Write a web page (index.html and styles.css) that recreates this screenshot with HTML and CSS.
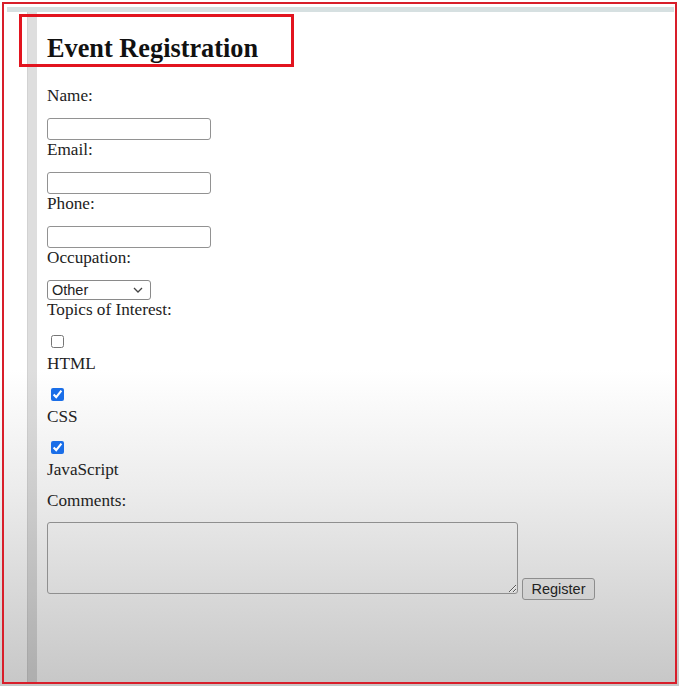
FILE: index.html
```html
<!DOCTYPE html>
<html lang="en">
<head>
<meta charset="utf-8">
<title>Event Registration</title>
<link rel="stylesheet" href="styles.css">
</head>
<body>
<div class="frame">
  <div class="strip"></div>
  <div class="page">
    <div class="gutter"></div>
    <div class="bar"></div>
    <form class="content">
      <h1 class="title">Event Registration</h1>
      <label class="lbl first" for="name">Name:</label>
      <input class="field" type="text" id="name">
      <label class="lbl" for="email">Email:</label>
      <input class="field" type="email" id="email">
      <label class="lbl" for="phone">Phone:</label>
      <input class="field" type="tel" id="phone">
      <label class="lbl" for="occ">Occupation:</label>
      <div class="select-wrap">
        <select class="select" id="occ">
          <option>Student</option>
          <option>Professional</option>
          <option selected>Other</option>
        </select>
        <svg class="chev" width="10" height="6" viewBox="0 0 10 6"><path d="M1 1 L5 5 L9 1" fill="none" stroke="#444" stroke-width="1.3"/></svg>
      </div>
      <label class="lbl topics">Topics of Interest:</label>
      <input class="check" type="checkbox" id="t1">
      <label class="lbl cb-lbl" for="t1">HTML</label>
      <input class="check" type="checkbox" id="t2" checked>
      <label class="lbl cb-lbl" for="t2">CSS</label>
      <input class="check" type="checkbox" id="t3" checked>
      <label class="lbl cb-lbl" for="t3">JavaScript</label>
      <label class="lbl comments" for="cm">Comments:</label>
      <div class="submit-row">
        <textarea class="area" id="cm"></textarea>
        <button class="btn" type="button">Register</button>
      </div>
    </form>
  </div>
  <div class="callout"></div>
</div>
</body>
</html>
```

FILE: styles.css
```css
html, body {
  margin: 0;
  padding: 0;
}
body {
  width: 679px;
  height: 686px;
  overflow: hidden;
  background: linear-gradient(to bottom, #ffffff 0, #ffffff 370px, #ececec 490px, #d9d9d9 590px, #c7c7c7 686px);
  font-family: "Liberation Serif", "Times New Roman", serif;
  color: #222;
}
.frame {
  position: relative;
  box-sizing: border-box;
  margin: 2px 2px 0 2px;
  width: 675px;
  height: 682px;
  border: 2px solid #d81e2a;
  padding: 3px 1px 0 3px;
  display: flex;
  flex-direction: column;
}
.strip {
  height: 5px;
  background: #d6e0e1;
  flex: none;
}
.page {
  flex: 1;
  display: flex;
}
.gutter {
  width: 20px;
  flex: none;
}
.bar {
  width: 10px;
  flex: none;
  background: rgba(0, 0, 0, 0.13);
  border-left: 1px solid rgba(0,0,0,0.05);
  box-sizing: border-box;
}
.content {
  padding-left: 10px;
  display: flex;
  flex-direction: column;
  align-items: flex-start;
}
.title {
  margin: 22px 0 0 0;
  font-size: 26.3px;
  line-height: 30px;
  font-weight: bold;
  color: #111;
}
.lbl {
  display: block;
  font-size: 17.2px;
  line-height: 18px;
  margin-top: 1px;
}
.lbl.first {
  margin-top: 23px;
}
.field {
  box-sizing: border-box;
  width: 164px;
  height: 22px;
  margin: 13px 0 0 0;
  border: 1px solid #929292;
  border-radius: 3px;
  background: #fff;
  padding: 1px 3px;
}
.select-wrap {
  position: relative;
  margin-top: 13px;
  display: flex;
}
.select {
  appearance: none;
  -webkit-appearance: none;
  box-sizing: border-box;
  width: 104px;
  height: 20px;
  margin: 0;
  border: 1px solid #8a8a8a;
  border-radius: 3px;
  background: #fff;
  font-family: "Liberation Sans", Arial, sans-serif;
  font-size: 14.5px;
  color: #222;
  padding: 0 0 0 4px;
  line-height: 18px;
}
.chev {
  position: absolute;
  right: 8px;
  top: 7px;
  pointer-events: none;
}
.lbl.topics {
  margin-bottom: 1px;
}
.check {
  width: 13px;
  height: 13px;
  margin: 15px 0 0 4px;
  accent-color: #1a6ee8;
}
.lbl.cb-lbl {
  margin-top: 7px;
}
.lbl.comments {
  margin-top: 13px;
}
.submit-row {
  display: flex;
  align-items: flex-start;
  margin-top: 12px;
}
.area {
  box-sizing: border-box;
  width: 471px;
  height: 72px;
  margin: 0;
  border: 1px solid #8f8f8f;
  border-radius: 3px;
  background: transparent;
  resize: both;
}
.btn {
  box-sizing: border-box;
  margin: 56px 0 0 4px;
  width: 73px;
  height: 22px;
  padding: 0;
  border: 1px solid #8d8d8d;
  border-radius: 3px;
  background: rgba(0, 0, 0, 0.03);
  font-family: "Liberation Sans", Arial, sans-serif;
  font-size: 14.5px;
  color: #222;
}
.callout {
  position: absolute;
  left: 15px;
  top: 10px;
  width: 275px;
  height: 53px;
  box-sizing: border-box;
  border: 3px solid #e2141f;
  pointer-events: none;
}
```
